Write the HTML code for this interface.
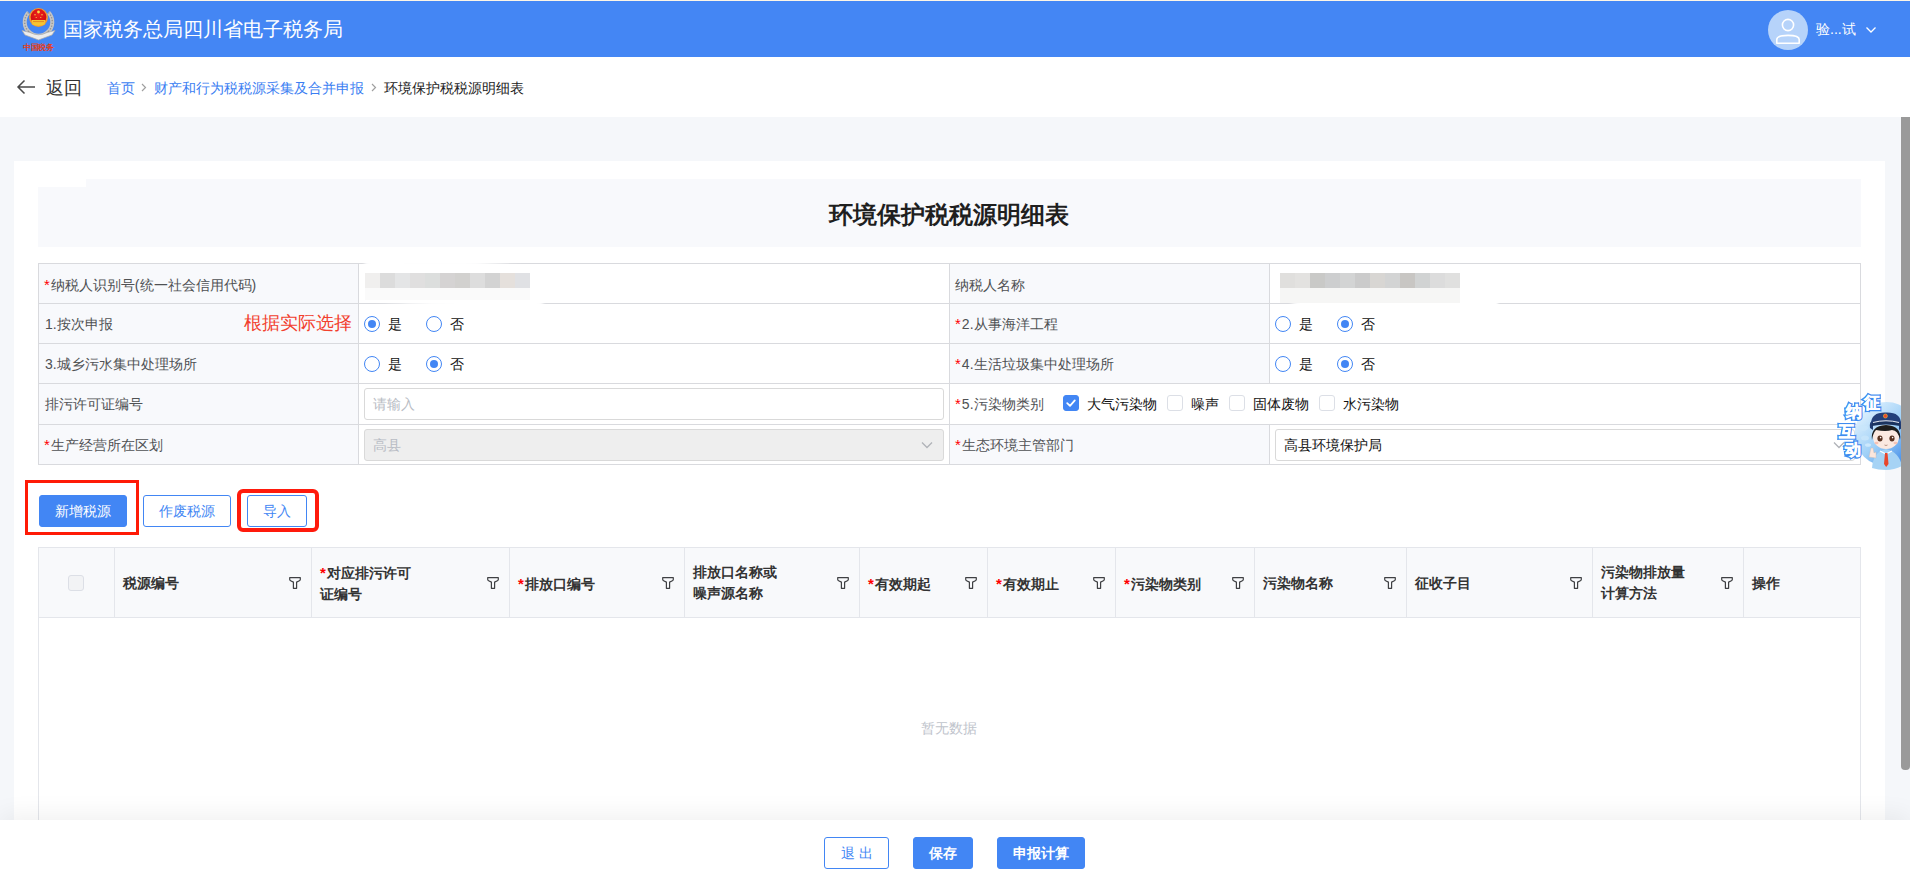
<!DOCTYPE html>
<html><head><meta charset="utf-8">
<style>
*{box-sizing:border-box;margin:0;padding:0}
html,body{width:1910px;height:882px;overflow:hidden}
body{position:relative;background:#f5f7fa;font-family:"Liberation Sans",sans-serif;color:#303133}
.a{position:absolute}
.t{position:absolute;white-space:nowrap;line-height:14px;font-size:14px}
.hl{position:absolute;height:1px;background:#d9dade}
.vl{position:absolute;width:1px;background:#d9dade}
.lab{color:#4f5154}
.req{color:#f00;font-size:15px;margin-right:1px}
.radio{position:absolute;width:16px;height:16px;border:1px solid #4286f4;border-radius:50%;background:#fff}
.radio.on:after{content:"";position:absolute;left:3px;top:3px;width:8px;height:8px;border-radius:50%;background:#4286f4}
.cb{position:absolute;width:16px;height:16px;border:1px solid #dcdfe6;border-radius:3px;background:#fff}
.val{color:#111}
.btn{position:absolute;height:32px;border-radius:3px;font-size:14px;line-height:30px;text-align:center;white-space:nowrap}
.bp{background:#4286f4;color:#fff;border:1px solid #4286f4}
.bo{background:#fff;color:#4286f4;border:1px solid #4286f4}
.th{position:absolute;white-space:nowrap;font-size:14px;line-height:21px;font-weight:bold;color:#333}
.fil{position:absolute;width:12px;height:12px}
</style></head><body>

<!-- header -->
<div class="a" style="left:0;top:0;width:1910px;height:57px;background:#4486f4"></div>
<div class="a" style="left:0;top:0;width:1910px;height:1px;background:#fdf5e6"></div>
<div class="t" style="left:63px;top:19px;font-size:20px;line-height:20px;color:#fff">国家税务总局四川省电子税务局</div>

<!-- breadcrumb -->
<div class="a" style="left:0;top:57px;width:1910px;height:60px;background:#fff"></div>

<!-- card -->
<div class="a" style="left:14px;top:161px;width:1871px;height:721px;background:#fff"></div>
<div class="a" style="left:38px;top:179px;width:1823px;height:68px;background:#f8f9fc"></div>
<div class="a" style="left:38px;top:179px;width:48px;height:8px;background:#fff"></div>
<div class="t" style="left:829px;top:203px;font-size:24px;line-height:24px;font-weight:bold;color:#1f1f1f">环境保护税税源明细表</div>

<svg class="a" style="left:20px;top:7px" width="38" height="46" viewBox="0 0 38 46">
<defs><radialGradient id="rg" cx="50%" cy="35%" r="65%"><stop offset="0" stop-color="#f0201c"/><stop offset="1" stop-color="#c80c10"/></radialGradient></defs>
<path d="M8.5 5.5 A12 12 0 0 0 28.5 24.5 M28.5 5.5 A12 12 0 0 1 8.5 24.5" stroke="#c4c4c4" stroke-width="4" fill="none"/>
<path d="M8.5 5.5 A12 12 0 0 0 28.5 24.5 M28.5 5.5 A12 12 0 0 1 8.5 24.5" stroke="#8e8e8e" stroke-width="1.2" stroke-dasharray="1.2 1.6" fill="none"/>
<circle cx="18.5" cy="10.5" r="9.4" fill="#f29a2e"/>
<circle cx="18.5" cy="10" r="7.9" fill="url(#rg)"/>
<path d="M11.5 13 H25.5 L24.5 17.5 Q18.5 20 12.5 17.5 Z" fill="#f7c531"/>
<path d="M13 14.6 H24" stroke="#e07a20" stroke-width="0.8"/>
<circle cx="18.5" cy="5" r="1.4" fill="#f8d84a"/><circle cx="15" cy="7.8" r="0.7" fill="#f8d84a"/><circle cx="22" cy="7.8" r="0.7" fill="#f8d84a"/><circle cx="16.2" cy="10.5" r="0.6" fill="#f8d84a"/><circle cx="20.8" cy="10.5" r="0.6" fill="#f8d84a"/>
<path d="M2 23.5 L10 25.5 Q18.5 30 27 25.5 L35 23.5 L32 28 Q25 30.5 18.5 33 Q12 30.5 5 28 Z" fill="#ececec" stroke="#a9a9a9" stroke-width="0.7"/>
<text x="18.5" y="42.5" text-anchor="middle" font-family="Liberation Serif, serif" font-weight="bold" font-size="8.2" fill="#e0401f" letter-spacing="-0.3">中国税务</text>
</svg>
<div class="a" style="left:1768px;top:10px;width:40px;height:40px;border-radius:50%;background:#b6d3fa"></div>
<svg class="a" style="left:1768px;top:10px" width="40" height="40" viewBox="0 0 40 40">
<circle cx="20" cy="15" r="5.6" fill="none" stroke="#fff" stroke-width="1.6"/>
<path d="M8.8 33.2 V29.6 Q8.8 25.4 20 25.4 Q31.2 25.4 31.2 29.6 V33.2 Z" fill="none" stroke="#fff" stroke-width="1.6" stroke-linejoin="round"/>
</svg>
<div class="t" style="left:1816px;top:22px;color:#fff">验...试</div>
<svg class="a" style="left:1865px;top:26px" width="12" height="8" viewBox="0 0 12 8"><path d="M1.5 1.5 L6 6 L10.5 1.5" fill="none" stroke="#fff" stroke-width="1.3"/></svg>
<svg class="a" style="left:16px;top:79px" width="20" height="16" viewBox="0 0 20 16"><path d="M19 8 H2 M8.5 1.5 L2 8 L8.5 14.5" fill="none" stroke="#4a4a4a" stroke-width="1.5"/></svg>
<div class="t" style="left:46px;top:79px;font-size:18px;line-height:18px;color:#333">返回</div>
<div class="t" style="left:107px;top:81px;color:#3b7ef2">首页</div>
<!-- form -->
<div class="a" style="left:39px;top:264px;width:319px;height:39px;background:#f8f9fc"></div>
<div class="a" style="left:950px;top:264px;width:319px;height:39px;background:#f8f9fc"></div>
<div class="a" style="left:39px;top:304px;width:319px;height:39px;background:#f8f9fc"></div>
<div class="a" style="left:950px;top:304px;width:319px;height:39px;background:#f8f9fc"></div>
<div class="a" style="left:39px;top:344px;width:319px;height:39px;background:#f8f9fc"></div>
<div class="a" style="left:950px;top:344px;width:319px;height:39px;background:#f8f9fc"></div>
<div class="a" style="left:39px;top:384px;width:319px;height:40px;background:#f8f9fc"></div>
<div class="a" style="left:39px;top:425px;width:319px;height:39px;background:#f8f9fc"></div>
<div class="a" style="left:950px;top:425px;width:319px;height:39px;background:#f8f9fc"></div>
<div class="hl" style="left:38px;top:263px;width:1823px"></div>
<div class="hl" style="left:38px;top:303px;width:1823px"></div>
<div class="hl" style="left:38px;top:343px;width:1823px"></div>
<div class="hl" style="left:38px;top:383px;width:1823px"></div>
<div class="hl" style="left:38px;top:424px;width:1823px"></div>
<div class="hl" style="left:38px;top:464px;width:1823px"></div>
<div class="vl" style="left:38px;top:263px;height:202px"></div>
<div class="vl" style="left:358px;top:263px;height:202px"></div>
<div class="vl" style="left:949px;top:263px;height:202px"></div>
<div class="vl" style="left:1860px;top:263px;height:202px"></div>
<div class="vl" style="left:1269px;top:263px;height:121px"></div>
<div class="vl" style="left:1269px;top:424px;height:41px"></div>

<!-- row1 -->
<div class="t lab" style="left:44px;top:278px"><span class="req">*</span>纳税人识别号(统一社会信用代码)</div>
<div class="t lab" style="left:955px;top:278px">纳税人名称</div>
<!-- row2 -->
<div class="t lab" style="left:45px;top:317px">1.按次申报</div>
<div class="t" style="left:244px;top:314px;font-size:18px;line-height:18px;color:#f2402e">根据实际选择</div>
<div class="radio on" style="left:364px;top:316px"></div><div class="t val" style="left:388px;top:317px">是</div>
<div class="radio" style="left:426px;top:316px"></div><div class="t val" style="left:450px;top:317px">否</div>
<div class="t lab" style="left:955px;top:317px"><span class="req">*</span>2.从事海洋工程</div>
<div class="radio" style="left:1275px;top:316px"></div><div class="t val" style="left:1299px;top:317px">是</div>
<div class="radio on" style="left:1337px;top:316px"></div><div class="t val" style="left:1361px;top:317px">否</div>
<!-- row3 -->
<div class="t lab" style="left:45px;top:357px">3.城乡污水集中处理场所</div>
<div class="radio" style="left:364px;top:356px"></div><div class="t val" style="left:388px;top:357px">是</div>
<div class="radio on" style="left:426px;top:356px"></div><div class="t val" style="left:450px;top:357px">否</div>
<div class="t lab" style="left:955px;top:357px"><span class="req">*</span>4.生活垃圾集中处理场所</div>
<div class="radio" style="left:1275px;top:356px"></div><div class="t val" style="left:1299px;top:357px">是</div>
<div class="radio on" style="left:1337px;top:356px"></div><div class="t val" style="left:1361px;top:357px">否</div>
<!-- row4 -->
<div class="t lab" style="left:45px;top:397px">排污许可证编号</div>
<div class="a" style="left:364px;top:388px;width:580px;height:32px;border:1px solid #d9d9d9;border-radius:3px;background:#fff"></div>
<div class="t" style="left:373px;top:397px;color:#b8bcc4">请输入</div>
<div class="t lab" style="left:955px;top:397px"><span class="req">*</span>5.污染物类别</div>
<div class="cb" style="left:1063px;top:395px;background:#4286f4;border-color:#4286f4"><svg width="14" height="14" viewBox="0 0 14 14" style="position:absolute;left:0;top:0"><path d="M3.2 7.2 L6 9.8 L10.8 4.4" fill="none" stroke="#fff" stroke-width="1.8" stroke-linecap="round" stroke-linejoin="round"/></svg></div>
<div class="t val" style="left:1087px;top:397px">大气污染物</div>
<div class="cb" style="left:1167px;top:395px"></div><div class="t val" style="left:1191px;top:397px">噪声</div>
<div class="cb" style="left:1229px;top:395px"></div><div class="t val" style="left:1253px;top:397px">固体废物</div>
<div class="cb" style="left:1319px;top:395px"></div><div class="t val" style="left:1343px;top:397px">水污染物</div>
<!-- row5 -->
<div class="t lab" style="left:44px;top:438px"><span class="req">*</span>生产经营所在区划</div>
<div class="a" style="left:364px;top:429px;width:580px;height:32px;border:1px solid #d9d9d9;border-radius:3px;background:#eeeeee"></div>
<div class="t" style="left:373px;top:438px;color:#b8bcc4">高县</div>
<svg class="a" style="left:921px;top:441px" width="12" height="8" viewBox="0 0 12 8"><path d="M1 1.5 L6 6.5 L11 1.5" fill="none" stroke="#b0b3b8" stroke-width="1.3"/></svg>
<div class="t lab" style="left:955px;top:438px"><span class="req">*</span>生态环境主管部门</div>
<div class="a" style="left:1275px;top:429px;width:580px;height:32px;border:1px solid #d9d9d9;border-radius:3px;background:#fff"></div>
<div class="t val" style="left:1284px;top:438px">高县环境保护局</div>
<svg class="a" style="left:1833px;top:441px" width="12" height="8" viewBox="0 0 12 8"><path d="M1 1.5 L6 6.5 L11 1.5" fill="none" stroke="#b0b3b8" stroke-width="1.3"/></svg>

<!-- buttons -->
<div class="a" style="left:25px;top:480px;width:114px;height:55px;border:3px solid #ff1a06"></div>
<div class="btn bp" style="left:39px;top:495px;width:88px">新增税源</div>
<div class="btn bo" style="left:143px;top:495px;width:88px">作废税源</div>
<div class="a" style="left:237px;top:489px;width:82px;height:43px;border:4px solid #ff1a0c;border-radius:6px"></div>
<div class="btn bo" style="left:247px;top:495px;width:60px">导入</div>

<svg class="a" style="left:141px;top:83px" width="6" height="9" viewBox="0 0 6 9"><path d="M1 1 L4.5 4.5 L1 8" fill="none" stroke="#a0a0a0" stroke-width="1.2"/></svg>
<div class="t" style="left:154px;top:81px;color:#3b7ef2">财产和行为税税源采集及合并申报</div>
<svg class="a" style="left:371px;top:83px" width="6" height="9" viewBox="0 0 6 9"><path d="M1 1 L4.5 4.5 L1 8" fill="none" stroke="#a0a0a0" stroke-width="1.2"/></svg>
<div class="t" style="left:384px;top:81px;color:#222">环境保护税税源明细表</div>
<svg class="a" style="left:350px;top:255px" width="210" height="60" viewBox="350 255 210 60"><defs><filter id="bl" x="-10%" y="-30%" width="120%" height="160%"><feGaussianBlur stdDeviation="1.2"/></filter></defs><path d="M362 268 Q364 261 372 261 L467 261.5 Q510 264 540 268 Q550 272 548 292 Q546 306 536 306 L459 306 Q400 304 375 301 Q362 298 362 286 Z" fill="#fff" filter="url(#bl)"/></svg>
<div class="a" style="left:365px;top:273px;width:15px;height:15px;background:#f0efee"></div>
<div class="a" style="left:365px;top:288px;width:15px;height:12px;background:#fafafa"></div>
<div class="a" style="left:380px;top:273px;width:15px;height:15px;background:#dcdcdc"></div>
<div class="a" style="left:380px;top:288px;width:15px;height:12px;background:#fafafa"></div>
<div class="a" style="left:395px;top:273px;width:15px;height:15px;background:#e4e5e6"></div>
<div class="a" style="left:395px;top:288px;width:15px;height:12px;background:#fafafa"></div>
<div class="a" style="left:410px;top:273px;width:15px;height:15px;background:#e0dfdf"></div>
<div class="a" style="left:410px;top:288px;width:15px;height:12px;background:#fafafa"></div>
<div class="a" style="left:425px;top:273px;width:15px;height:15px;background:#dcdedd"></div>
<div class="a" style="left:425px;top:288px;width:15px;height:12px;background:#fafafa"></div>
<div class="a" style="left:440px;top:273px;width:15px;height:15px;background:#d5d3d3"></div>
<div class="a" style="left:440px;top:288px;width:15px;height:12px;background:#fafafa"></div>
<div class="a" style="left:455px;top:273px;width:15px;height:15px;background:#d2d1cf"></div>
<div class="a" style="left:455px;top:288px;width:15px;height:12px;background:#fafafa"></div>
<div class="a" style="left:470px;top:273px;width:15px;height:15px;background:#dddddd"></div>
<div class="a" style="left:470px;top:288px;width:15px;height:12px;background:#fafafa"></div>
<div class="a" style="left:485px;top:273px;width:15px;height:15px;background:#d3d3d3"></div>
<div class="a" style="left:485px;top:288px;width:15px;height:12px;background:#fafafa"></div>
<div class="a" style="left:500px;top:273px;width:15px;height:15px;background:#e5e0dc"></div>
<div class="a" style="left:500px;top:288px;width:15px;height:12px;background:#fafafa"></div>
<div class="a" style="left:515px;top:273px;width:15px;height:15px;background:#e0e1e4"></div>
<div class="a" style="left:515px;top:288px;width:15px;height:12px;background:#fafafa"></div>
<svg class="a" style="left:1270px;top:260px" width="240" height="65" viewBox="1270 260 240 65"><path d="M1282 272 Q1290 266 1330 266 L1400 267 Q1470 272 1492 285 Q1502 296 1496 310 Q1480 318 1440 318 Q1360 314 1300 306 Q1280 300 1279 288 Z" fill="#fff" filter="url(#bl)"/></svg>
<div class="a" style="left:1280px;top:273px;width:15px;height:15px;background:#e0dfdd"></div>
<div class="a" style="left:1280px;top:288px;width:15px;height:15px;background:#f6f6f5"></div>
<div class="a" style="left:1295px;top:273px;width:15px;height:15px;background:#e3e2e0"></div>
<div class="a" style="left:1295px;top:288px;width:15px;height:15px;background:#f6f6f5"></div>
<div class="a" style="left:1310px;top:273px;width:15px;height:15px;background:#c9c9c7"></div>
<div class="a" style="left:1310px;top:288px;width:15px;height:15px;background:#f6f6f5"></div>
<div class="a" style="left:1325px;top:273px;width:15px;height:15px;background:#cdcecf"></div>
<div class="a" style="left:1325px;top:288px;width:15px;height:15px;background:#f6f6f5"></div>
<div class="a" style="left:1340px;top:273px;width:15px;height:15px;background:#d3d4d4"></div>
<div class="a" style="left:1340px;top:288px;width:15px;height:15px;background:#f6f6f5"></div>
<div class="a" style="left:1355px;top:273px;width:15px;height:15px;background:#cbcbcb"></div>
<div class="a" style="left:1355px;top:288px;width:15px;height:15px;background:#f6f6f5"></div>
<div class="a" style="left:1370px;top:273px;width:15px;height:15px;background:#d8d6d3"></div>
<div class="a" style="left:1370px;top:288px;width:15px;height:15px;background:#f6f6f5"></div>
<div class="a" style="left:1385px;top:273px;width:15px;height:15px;background:#d3d4d4"></div>
<div class="a" style="left:1385px;top:288px;width:15px;height:15px;background:#f6f6f5"></div>
<div class="a" style="left:1400px;top:273px;width:15px;height:15px;background:#c8c6c3"></div>
<div class="a" style="left:1400px;top:288px;width:15px;height:15px;background:#f6f6f5"></div>
<div class="a" style="left:1415px;top:273px;width:15px;height:15px;background:#d1d3d3"></div>
<div class="a" style="left:1415px;top:288px;width:15px;height:15px;background:#f6f6f5"></div>
<div class="a" style="left:1430px;top:273px;width:15px;height:15px;background:#dcdcdc"></div>
<div class="a" style="left:1430px;top:288px;width:15px;height:15px;background:#f6f6f5"></div>
<div class="a" style="left:1445px;top:273px;width:15px;height:15px;background:#e0e0df"></div>
<div class="a" style="left:1445px;top:288px;width:15px;height:15px;background:#f6f6f5"></div>
<svg class="a" style="left:1836px;top:388px" width="74" height="82" viewBox="0 0 74 82">
<defs><linearGradient id="mg" x1="0.1" y1="0.1" x2="0.9" y2="0.9"><stop offset="0" stop-color="#e3f3ff"/><stop offset="0.5" stop-color="#9fd0f7"/><stop offset="1" stop-color="#3a86e8"/></linearGradient></defs>
<circle cx="50.6" cy="46" r="32" fill="url(#mg)"/>
<ellipse cx="27" cy="40" rx="5" ry="3" fill="#c9e6fb" opacity="0.8"/><ellipse cx="29" cy="50" rx="4" ry="2.5" fill="#c9e6fb" opacity="0.8"/><ellipse cx="32" cy="57" rx="3" ry="1.8" fill="#d5ecfc" opacity="0.8"/>
<path d="M36 80 Q37 64 50 61 Q63 64 66 78 Q58 82 50 82 Q42 82 36 80Z" fill="#a6d3f5"/>
<path d="M44 63 L50 66 L56 63" fill="none" stroke="#fff" stroke-width="1.2"/>
<path d="M49 65 L51.5 65 L52.5 76 L50.2 79 L48 76Z" fill="#e8462c"/>
<path d="M33 69 L35 60 L37 60 L38 65 L40 64 L40 70 Z" fill="#fbe6dc" stroke="#c9b8b0" stroke-width="0.4"/>
<ellipse cx="50" cy="49" rx="13" ry="12" fill="#fbe9e1"/>
<path d="M36 52 Q34 38 50 37 Q66 38 64 52 Q62 42 56 42 Q50 44 40 42 Q37 45 36 52Z" fill="#1d1d1d"/>
<path d="M34 40 Q33 33 37 33 L37 42Z M66 40 Q67 33 63 33 L63 42Z" fill="#1f3a70"/>
<path d="M35 36 Q35 24 50 24.5 Q65 24 65 36 Q50 33 35 36Z" fill="#24407a"/>
<path d="M36 35 Q50 31.5 64 35 L64 38 Q50 35 36 38Z" fill="#1b335f"/>
<path d="M37 34.5 Q50 31 63 34.5" stroke="#fff" stroke-width="0.9" fill="none"/>
<circle cx="49.4" cy="28" r="2" fill="#e8462c" stroke="#f6c12f" stroke-width="0.6"/>
<ellipse cx="44" cy="50.5" rx="2.6" ry="3" fill="#5a3322"/><ellipse cx="56" cy="50.5" rx="2.6" ry="3" fill="#5a3322"/>
<circle cx="44.6" cy="49.6" r="0.8" fill="#fff"/><circle cx="56.6" cy="49.6" r="0.8" fill="#fff"/>
<ellipse cx="40.5" cy="55" rx="2" ry="1.2" fill="#f7c2b4"/><ellipse cx="59.5" cy="55" rx="2" ry="1.2" fill="#f7c2b4"/>
<path d="M48.5 57 Q50 58 51.5 57" stroke="#8a5a4a" stroke-width="0.6" fill="none"/>
<filter id="gl" x="-30%" y="-30%" width="160%" height="160%"><feGaussianBlur stdDeviation="0.7"/></filter>
<g font-family="Liberation Sans, sans-serif" font-weight="bold" font-size="15.5" fill="#3f8cf0" stroke="#3f8cf0" stroke-width="3.2" filter="url(#gl)">
<text x="27.5" y="19.5">征</text><text x="10" y="29">纳</text><text x="3" y="48.5">互</text><text x="9" y="66.5">动</text>
</g>
<g font-family="Liberation Sans, sans-serif" font-weight="bold" font-size="15.5" fill="#fff" stroke="#fff" stroke-width="0.5">
<text x="27.5" y="19.5">征</text><text x="10" y="29">纳</text><text x="3" y="48.5">互</text><text x="9" y="66.5">动</text>
</g>
</svg>
<!-- table -->
<div class="a" style="left:38px;top:547px;width:1823px;height:71px;background:#f8f9fb"></div>
<div class="a" style="left:38px;top:618px;width:1823px;height:210px;background:#fff"></div>
<div class="hl" style="left:38px;top:547px;width:1823px;background:#e4e6eb"></div>
<div class="hl" style="left:38px;top:617px;width:1823px;background:#e4e6eb"></div>
<div class="vl" style="left:38px;top:547px;height:290px;background:#e4e6eb"></div>
<div class="vl" style="left:114px;top:547px;height:71px;background:#e4e6eb"></div>
<div class="vl" style="left:311px;top:547px;height:71px;background:#e4e6eb"></div>
<div class="vl" style="left:509px;top:547px;height:71px;background:#e4e6eb"></div>
<div class="vl" style="left:684px;top:547px;height:71px;background:#e4e6eb"></div>
<div class="vl" style="left:859px;top:547px;height:71px;background:#e4e6eb"></div>
<div class="vl" style="left:987px;top:547px;height:71px;background:#e4e6eb"></div>
<div class="vl" style="left:1115px;top:547px;height:71px;background:#e4e6eb"></div>
<div class="vl" style="left:1254px;top:547px;height:71px;background:#e4e6eb"></div>
<div class="vl" style="left:1406px;top:547px;height:71px;background:#e4e6eb"></div>
<div class="vl" style="left:1592px;top:547px;height:71px;background:#e4e6eb"></div>
<div class="vl" style="left:1743px;top:547px;height:71px;background:#e4e6eb"></div>
<div class="vl" style="left:1860px;top:547px;height:290px;background:#e4e6eb"></div>
<div class="cb" style="left:68px;top:575px;background:#f2f3f5;border-color:#dcdfe6"></div>
<div class="th" style="left:123px;top:573px">税源编号</div>
<svg class="fil" style="left:289px;top:577px" viewBox="0 0 12 12"><path d="M0.7 0.7 H11.3 V2.6 Q11.3 3.3 10.4 3.7 L7.6 5.1 V11.3 H4.4 V5.1 L1.6 3.7 Q0.7 3.3 0.7 2.6 Z" fill="none" stroke="#3f4043" stroke-width="1.2" stroke-linejoin="round"/></svg>
<div class="th" style="left:320px;top:562px"><span class="req">*</span>对应排污许可<br>证编号</div>
<svg class="fil" style="left:487px;top:577px" viewBox="0 0 12 12"><path d="M0.7 0.7 H11.3 V2.6 Q11.3 3.3 10.4 3.7 L7.6 5.1 V11.3 H4.4 V5.1 L1.6 3.7 Q0.7 3.3 0.7 2.6 Z" fill="none" stroke="#3f4043" stroke-width="1.2" stroke-linejoin="round"/></svg>
<div class="th" style="left:518px;top:573px"><span class="req">*</span>排放口编号</div>
<svg class="fil" style="left:662px;top:577px" viewBox="0 0 12 12"><path d="M0.7 0.7 H11.3 V2.6 Q11.3 3.3 10.4 3.7 L7.6 5.1 V11.3 H4.4 V5.1 L1.6 3.7 Q0.7 3.3 0.7 2.6 Z" fill="none" stroke="#3f4043" stroke-width="1.2" stroke-linejoin="round"/></svg>
<div class="th" style="left:693px;top:562px">排放口名称或<br>噪声源名称</div>
<svg class="fil" style="left:837px;top:577px" viewBox="0 0 12 12"><path d="M0.7 0.7 H11.3 V2.6 Q11.3 3.3 10.4 3.7 L7.6 5.1 V11.3 H4.4 V5.1 L1.6 3.7 Q0.7 3.3 0.7 2.6 Z" fill="none" stroke="#3f4043" stroke-width="1.2" stroke-linejoin="round"/></svg>
<div class="th" style="left:868px;top:573px"><span class="req">*</span>有效期起</div>
<svg class="fil" style="left:965px;top:577px" viewBox="0 0 12 12"><path d="M0.7 0.7 H11.3 V2.6 Q11.3 3.3 10.4 3.7 L7.6 5.1 V11.3 H4.4 V5.1 L1.6 3.7 Q0.7 3.3 0.7 2.6 Z" fill="none" stroke="#3f4043" stroke-width="1.2" stroke-linejoin="round"/></svg>
<div class="th" style="left:996px;top:573px"><span class="req">*</span>有效期止</div>
<svg class="fil" style="left:1093px;top:577px" viewBox="0 0 12 12"><path d="M0.7 0.7 H11.3 V2.6 Q11.3 3.3 10.4 3.7 L7.6 5.1 V11.3 H4.4 V5.1 L1.6 3.7 Q0.7 3.3 0.7 2.6 Z" fill="none" stroke="#3f4043" stroke-width="1.2" stroke-linejoin="round"/></svg>
<div class="th" style="left:1124px;top:573px"><span class="req">*</span>污染物类别</div>
<svg class="fil" style="left:1232px;top:577px" viewBox="0 0 12 12"><path d="M0.7 0.7 H11.3 V2.6 Q11.3 3.3 10.4 3.7 L7.6 5.1 V11.3 H4.4 V5.1 L1.6 3.7 Q0.7 3.3 0.7 2.6 Z" fill="none" stroke="#3f4043" stroke-width="1.2" stroke-linejoin="round"/></svg>
<div class="th" style="left:1263px;top:573px">污染物名称</div>
<svg class="fil" style="left:1384px;top:577px" viewBox="0 0 12 12"><path d="M0.7 0.7 H11.3 V2.6 Q11.3 3.3 10.4 3.7 L7.6 5.1 V11.3 H4.4 V5.1 L1.6 3.7 Q0.7 3.3 0.7 2.6 Z" fill="none" stroke="#3f4043" stroke-width="1.2" stroke-linejoin="round"/></svg>
<div class="th" style="left:1415px;top:573px">征收子目</div>
<svg class="fil" style="left:1570px;top:577px" viewBox="0 0 12 12"><path d="M0.7 0.7 H11.3 V2.6 Q11.3 3.3 10.4 3.7 L7.6 5.1 V11.3 H4.4 V5.1 L1.6 3.7 Q0.7 3.3 0.7 2.6 Z" fill="none" stroke="#3f4043" stroke-width="1.2" stroke-linejoin="round"/></svg>
<div class="th" style="left:1601px;top:562px">污染物排放量<br>计算方法</div>
<svg class="fil" style="left:1721px;top:577px" viewBox="0 0 12 12"><path d="M0.7 0.7 H11.3 V2.6 Q11.3 3.3 10.4 3.7 L7.6 5.1 V11.3 H4.4 V5.1 L1.6 3.7 Q0.7 3.3 0.7 2.6 Z" fill="none" stroke="#3f4043" stroke-width="1.2" stroke-linejoin="round"/></svg>
<div class="th" style="left:1752px;top:573px">操作</div>
<div class="t" style="left:921px;top:721px;color:#c0c4cc">暂无数据</div>
<div class="a" style="left:0;top:820px;width:1910px;height:62px;background:#fff;box-shadow:0 -6px 24px rgba(0,0,0,0.06)"></div>
<div class="btn bo" style="left:824px;top:837px;width:65px;letter-spacing:4px;text-indent:4px">退出</div>
<div class="btn bp" style="left:913px;top:837px;width:60px;font-weight:bold">保存</div>
<div class="btn bp" style="left:997px;top:837px;width:88px;font-weight:bold">申报计算</div>
<div class="a" style="left:1901px;top:117px;width:9px;height:653px;background:#9a9a9a;border-radius:0 0 4px 4px"></div>
</body></html>
